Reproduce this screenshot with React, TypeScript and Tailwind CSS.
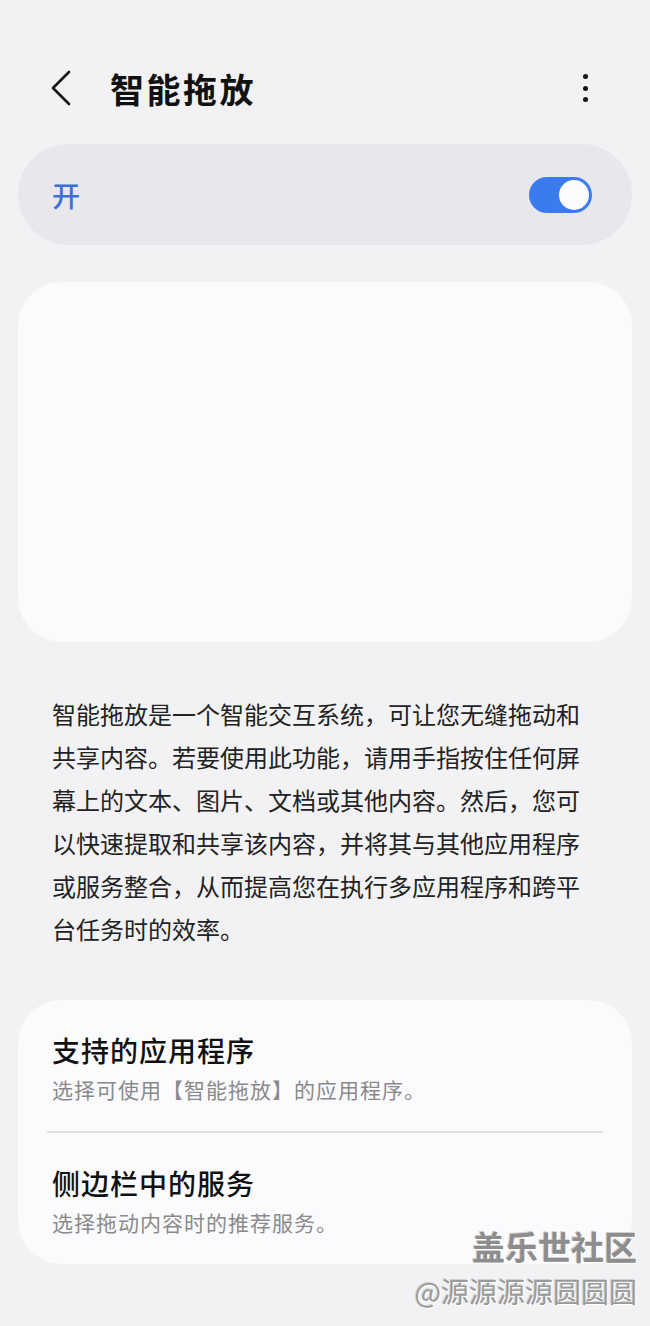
const font = {
  fontFamily: '"Noto Sans CJK SC", "Noto Sans", Roboto, sans-serif',
};

const BackIcon = () => (
  <svg width="24" height="36" viewBox="0 0 24 36" fill="none">
    <path
      d="M19 2 L3 18 L19 34"
      stroke="#111"
      strokeWidth="2.6"
      strokeLinecap="round"
      strokeLinejoin="round"
    />
  </svg>
);

const MoreIcon = () => (
  <div className="flex flex-col items-center gap-[6.5px]">
    <span className="h-[5px] w-[5px] rounded-full bg-[#111]" />
    <span className="h-[5px] w-[5px] rounded-full bg-[#111]" />
    <span className="h-[5px] w-[5px] rounded-full bg-[#111]" />
  </div>
);

const Toggle = () => (
  <div className="flex h-[36px] w-[63px] items-center justify-end rounded-full bg-[#3b7bf0] pr-[3px]">
    <div className="h-[30px] w-[30px] rounded-full bg-[#fbfbfd]" />
  </div>
);

interface RowProps {
  title: string;
  sub: string;
}

const Row = ({ title, sub }: RowProps) => (
  <div className="flex flex-col px-[34px] pt-[32px] pb-[27px]">
    <div className="text-[28px] leading-[36px] font-medium tracking-[1px] text-[#111]">{title}</div>
    <div className="mt-[6px] text-[21px] leading-[30px] tracking-[1px] text-[#8a8a8c]">{sub}</div>
  </div>
);

export default function App() {
  return (
    <div className="relative min-h-[1326px] w-[650px] overflow-hidden bg-[#f2f2f4]" style={font}>
      {/* header */}
      <div className="mt-[60px] flex h-[56px] items-center pl-[50px] pr-[62px]">
        <BackIcon />
        <div className="ml-[36px] text-[34px] font-bold tracking-[2.5px] text-[#111]">智能拖放</div>
        <div className="ml-auto">
          <MoreIcon />
        </div>
      </div>

      {/* master switch */}
      <div className="mx-[18px] mt-[28px] flex h-[101px] items-center rounded-full bg-[#e8e8ec] pl-[34px] pr-[40px]">
        <div className="text-[28px] font-medium text-[#3d6fd6]">开</div>
        <div className="ml-auto">
          <Toggle />
        </div>
      </div>

      {/* preview */}
      <div className="mx-[18px] mt-[37px] h-[360px] rounded-[44px] bg-[#fbfbfd]" />

      {/* description */}
      <p className="mt-[50px] ml-[52px] w-[532px] text-[24px] leading-[43px] text-[#222]">
        智能拖放是一个智能交互系统，可让您无缝拖动和共享内容。若要使用此功能，请用手指按住任何屏幕上的文本、图片、文档或其他内容。然后，您可以快速提取和共享该内容，并将其与其他应用程序或服务整合，从而提高您在执行多应用程序和跨平台任务时的效率。
      </p>

      {/* options */}
      <div className="mx-[18px] mt-[50px] rounded-[44px] bg-[#fbfbfd]">
        <Row title="支持的应用程序" sub="选择可使用【智能拖放】的应用程序。" />
        <div className="mx-[29px] h-[1.5px] bg-[#e2e2e4]" />
        <Row title="侧边栏中的服务" sub="选择拖动内容时的推荐服务。" />
      </div>

      {/* watermark */}
      <div className="absolute right-[13px] top-[1224px] flex flex-col items-end">
        <div className="text-[33px] leading-[44px] font-bold text-[#8d8d8d] [text-shadow:1px_1px_0_#fff,-1px_-1px_0_#cfcfcf]">
          盖乐世社区
        </div>
        <div className="text-[28px] leading-[46px] text-[#9a9a9a] [text-shadow:1px_1px_0_#fff,-1px_-1px_0_#cfcfcf]">
          @源源源源圆圆圆
        </div>
      </div>
    </div>
  );
}
